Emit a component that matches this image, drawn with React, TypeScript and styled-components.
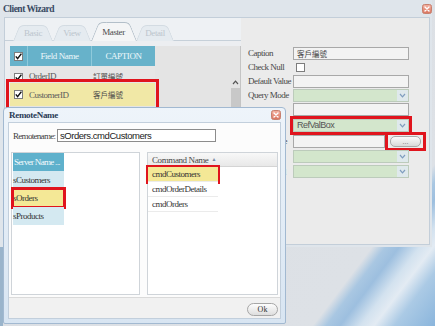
import React from 'react';
import styled, { createGlobalStyle } from 'styled-components';

const serif = `'Liberation Serif', 'Noto Sans CJK TC', serif`;
const sans = `'Liberation Sans', 'Noto Sans CJK TC', sans-serif`;
const cjk = `'Noto Sans CJK TC', 'Liberation Serif', sans-serif`;
const markRed = '#e0141d';

const GlobalStyle = createGlobalStyle`
    html, body {
        margin: 0;
        padding: 0;
    }
    body {
        width: 435px;
        height: 326px;
        overflow: hidden;
        font-family: ${serif};
    }
`;

const CloseIcon = () => (
    <svg width="10" height="10" viewBox="0 0 10 10">
        <defs>
            <linearGradient id="cg" x1="0" y1="0" x2="0" y2="1">
                <stop offset="0" stopColor="#f4b2a2" />
                <stop offset="1" stopColor="#d9735e" />
            </linearGradient>
        </defs>
        <rect x="0.5" y="0.5" width="9" height="9" rx="2" fill="url(#cg)" stroke="#c7806f" />
        <path d="M3 3 L7 7 M7 3 L3 7" stroke="#fff" strokeWidth="1.4" strokeLinecap="round" />
    </svg>
);

const Check = ({ checked }: { checked?: boolean }) => (
    <svg width="9" height="9" viewBox="0 0 9 9">
        <rect x="0.5" y="0.5" width="8" height="8" fill="#fff" stroke="#7d7d7d" />
        {checked && <path d="M1.8 4.4 L3.6 6.6 L7.4 1.6" stroke="#111" strokeWidth="1.5" fill="none" />}
    </svg>
);

const Chevron = ({ up }: { up?: boolean }) => (
    <svg width="7" height="5" viewBox="0 0 7 5">
        <path d={up ? 'M1 4 L3.5 1.2 L6 4' : 'M1 1 L3.5 3.8 L6 1'} stroke={up ? '#555' : '#7f9dbf'} strokeWidth="1.2" fill="none" />
    </svg>
);

const grid = [
    { name: 'OrderID', caption: '訂單編號' },
    { name: 'CustomerID', caption: '客戶編號', selected: true },
];

const tabs = [
    { label: 'Basic', w: 40 },
    { label: 'View', w: 38 },
    { label: 'Master', w: 45, active: true },
    { label: 'Detail', w: 38 },
];

const servers = ['sCustomers', 'sOrders', 'sProducts'];
const commands = ['cmdCustomers', 'cmdOrderDetails', 'cmdOrders'];

export default function App() {
    return (
        <>
            <GlobalStyle />
            <Desktop>
                <WizardWindow>
                    <TitleBar>
                        <span>Client Wizard</span>
                        <CloseIcon />
                    </TitleBar>
                    <WizardBody>
                        <LeftPane>
                            <TabStrip>
                                {tabs.map((t) => (
                                    <Tab key={t.label} $w={t.w} $active={t.active}>
                                        {t.label}
                                    </Tab>
                                ))}
                            </TabStrip>
                            <GridArea>
                                <GridPanel>
                                    <FieldGrid>
                                        <GridRow $header>
                                            <HeadCell>
                                                <Check checked />
                                            </HeadCell>
                                            <HeadCell>Field Name</HeadCell>
                                            <HeadCell>CAPTION</HeadCell>
                                        </GridRow>
                                        {grid.map((r) => (
                                            <GridRow key={r.name} $selected={r.selected}>
                                                <BoxCell>
                                                    <Check checked />
                                                </BoxCell>
                                                <Cell>{r.name}</Cell>
                                                <CjkCell>{r.caption}</CjkCell>
                                            </GridRow>
                                        ))}
                                    </FieldGrid>
                                    <ScrollBar>
                                        <ScrollArrow>
                                            <Chevron up />
                                        </ScrollArrow>
                                        <ScrollThumb />
                                    </ScrollBar>
                                </GridPanel>
                            </GridArea>
                        </LeftPane>
                        <FormPane>
                            <FormRow $h={14}>
                                <Label>Caption</Label>
                                <TextBox $w={116}>客戶編號</TextBox>
                            </FormRow>
                            <FormRow $h={14}>
                                <Label>Check Null</Label>
                                <CheckWrap>
                                    <Check />
                                </CheckWrap>
                            </FormRow>
                            <FormRow $h={14}>
                                <Label>Default Value</Label>
                                <TextBox $w={116} />
                            </FormRow>
                            <FormRow $h={14}>
                                <Label>Query Mode</Label>
                                <Select />
                            </FormRow>
                            <FormRow $h={15}>
                                <Label>Format</Label>
                                <TextBox $w={116} />
                            </FormRow>
                            <FormRow $h={16}>
                                <Label>Editor</Label>
                                <Select $marked>RefValBox</Select>
                            </FormRow>
                            <FormRow $h={16}>
                                <Label>Editor Value</Label>
                                <TextBox $w={92} />
                                <MarkFrame>
                                    <DotsButton>...</DotsButton>
                                </MarkFrame>
                            </FormRow>
                            <FormRow $h={15}>
                                <Label>Edit Mask</Label>
                                <Select />
                            </FormRow>
                            <FormRow $h={15}>
                                <Label>Query Field</Label>
                                <Select />
                            </FormRow>
                        </FormPane>
                    </WizardBody>
                </WizardWindow>

                <RemoteDialog>
                    <DialogTitle>
                        <span>RemoteName</span>
                        <CloseIcon />
                    </DialogTitle>
                    <DialogContent>
                        <NameRow>
                            <NameLabel>Remotename:</NameLabel>
                            <NameInput>sOrders.cmdCustomers</NameInput>
                        </NameRow>
                        <ListsRow>
                            <ListPanel $w={129}>
                                <ServerHeader>Server Name ...</ServerHeader>
                                {servers.map((s) => (
                                    <ServerItem key={s} $selected={s === 'sOrders'}>
                                        {s}
                                    </ServerItem>
                                ))}
                            </ListPanel>
                            <ListPanel $w={131}>
                                <CommandHeader>
                                    Command Name <SortMark>▲</SortMark>
                                </CommandHeader>
                                {commands.map((c) => (
                                    <CommandItem key={c} $selected={c === 'cmdCustomers'}>
                                        {c}
                                    </CommandItem>
                                ))}
                            </ListPanel>
                        </ListsRow>
                        <DialogFooter>
                            <OkButton>Ok</OkButton>
                        </DialogFooter>
                    </DialogContent>
                </RemoteDialog>
            </Desktop>
        </>
    );
}

const Desktop = styled.div`
    position: relative;
    width: 435px;
    height: 326px;
    overflow: hidden;
    background: linear-gradient(to right, #9ab4cb 0 3px, transparent 3px),
        linear-gradient(
            127deg,
            #dadee3 0%,
            #dde1e6 82%,
            #a9c7e2 84%,
            #9dbfdf 86%,
            #d3e2ef 89%,
            #e3ebf3 91%,
            #abcae5 94%,
            #8ab5dc 100%
        );
`;

const WizardWindow = styled.div`
    width: 432px;
    height: 247px;
    display: flex;
    flex-direction: column;
    background: #dfe5eb;
`;

const TitleBar = styled.div`
    height: 17px;
    display: flex;
    align-items: center;
    justify-content: space-between;
    padding: 0 0 0 3px;
    font: bold 9.5px ${serif};
    letter-spacing: -0.5px;
    color: #3a4a63;
`;

const WizardBody = styled.div`
    flex: 1;
    display: flex;
    margin: 0 2px 2px 4px;
    border: 1px solid #c3ced9;
    background: #eceef1;
`;

const LeftPane = styled.div`
    width: 236px;
    display: flex;
    flex-direction: column;
`;

const TabStrip = styled.div`
    height: 22px;
    display: flex;
    align-items: flex-end;
    padding-left: 8px;
    border-bottom: 1px solid #c6d0d9;
    background: #eef1f4;
`;

const Tab = styled.div<{ $active?: boolean; $w: number }>`
    position: relative;
    z-index: ${({ $active }) => ($active ? 2 : 1)};
    isolation: isolate;
    width: ${({ $w }) => $w}px;
    height: ${({ $active }) => ($active ? 19 : 16)}px;
    margin-bottom: -1px;
    display: flex;
    align-items: center;
    justify-content: center;
    font: 9px ${serif};
    letter-spacing: -0.4px;
    color: ${({ $active }) => ($active ? '#4b4b4b' : '#bcc5cd')};
    &::before,
    &::after {
        content: '';
        position: absolute;
        top: 0;
        bottom: 0;
        z-index: -1;
        border: 1px solid ${({ $active }) => ($active ? '#b3bfc9' : '#d3dbe2')};
        border-bottom: none;
        background: ${({ $active }) => ($active ? '#f4f5f6' : '#e5ebf0')};
        transform-origin: bottom;
    }
    &::before {
        left: 0;
        right: 50%;
        border-right: none;
        border-radius: 5px 0 0 0;
        transform: skewX(-22deg);
    }
    &::after {
        left: 50%;
        right: 0;
        border-left: none;
        border-radius: 0 5px 0 0;
        transform: skewX(22deg);
    }
`;

const GridArea = styled.div`
    flex: 1;
    display: flex;
    padding: 5px 0 0 5px;
`;

const GridPanel = styled.div`
    flex: 1;
    display: flex;
    background: #e4e4e4;
    border-right: 1px solid #c4c4c4;
`;

const FieldGrid = styled.div`
    width: 145px;
    display: flex;
    flex-direction: column;
`;

const GridRow = styled.div<{ $header?: boolean; $selected?: boolean }>`
    display: grid;
    grid-template-columns: 18px 64px 63px;
    height: ${({ $header, $selected }) => ($header ? 20 : $selected ? 23 : 17)}px;
    background: ${({ $header, $selected }) => ($header ? '#67b2ca' : $selected ? '#f1e8a6' : '#e6e6e6')};
    outline: ${({ $selected }) => ($selected ? `3px solid ${markRed}` : 'none')};
    outline-offset: 1px;
`;

const HeadCell = styled.div`
    display: flex;
    align-items: center;
    justify-content: center;
    border-right: 1px solid #8fcadb;
    font: 9px ${serif};
    letter-spacing: -0.4px;
    color: #eef8fb;
    &:last-child {
        border-right: none;
    }
`;

const BoxCell = styled.div`
    padding: 2px 0 0 4px;
`;

const Cell = styled.div`
    display: flex;
    align-items: center;
    padding-left: 1px;
    font: 9px ${serif};
    letter-spacing: -0.5px;
    color: #5a5a5a;
`;

const CjkCell = styled(Cell)`
    font: 7.5px ${cjk};
    letter-spacing: 0;
    color: #4a4a4a;
`;

const ScrollBar = styled.div`
    width: 9px;
    margin-left: auto;
    padding-top: 30px;
    display: flex;
    flex-direction: column;
`;

const ScrollArrow = styled.div`
    height: 12px;
    display: flex;
    align-items: center;
    justify-content: center;
`;

const ScrollThumb = styled.div`
    flex: 1;
    background: #c8c8c8;
`;

const FormPane = styled.div`
    flex: 1;
    display: flex;
    flex-direction: column;
    padding: 28px 0 0 7px;
    background: #ebebeb;
`;

const FormRow = styled.div<{ $h: number }>`
    height: ${({ $h }) => $h}px;
    display: flex;
    align-items: center;
`;

const Label = styled.div`
    width: 45px;
    flex-shrink: 0;
    white-space: nowrap;
    font: 9px ${serif};
    letter-spacing: -0.5px;
    color: #474747;
`;

const TextBox = styled.div<{ $w: number }>`
    width: ${({ $w }) => $w}px;
    height: 13px;
    box-sizing: border-box;
    padding-left: 3px;
    border: 1px solid #a8a8a8;
    background: #f3f3f3;
    display: flex;
    align-items: center;
    font: 7.5px ${cjk};
    color: #444;
`;

const CheckWrap = styled.div`
    padding-left: 3px;
    display: flex;
`;

const Select = styled.div<{ $marked?: boolean }>`
    position: relative;
    width: 116px;
    height: 13px;
    box-sizing: border-box;
    padding-left: 3px;
    border: 1px solid #bccbbb;
    background: linear-gradient(to right, #d3e6cc 0 calc(100% - 11px), #dfe9ec calc(100% - 11px));
    display: flex;
    align-items: center;
    font: 9px ${sans};
    letter-spacing: -0.5px;
    color: #555;
    outline: ${({ $marked }) => ($marked ? `3px solid ${markRed}` : 'none')};
    outline-offset: 0;
    &::after {
        content: '';
        position: absolute;
        right: 2px;
        top: 3px;
        width: 7px;
        height: 5px;
        background: url("data:image/svg+xml,%3Csvg xmlns='http://www.w3.org/2000/svg' width='7' height='5'%3E%3Cpath d='M1 1 L3.5 3.8 L6 1' stroke='%237f9dbf' stroke-width='1.2' fill='none'/%3E%3C/svg%3E");
    }
`;

const MarkFrame = styled.div`
    margin-left: 3px;
    padding: 1px 2px;
    display: flex;
    outline: 3px solid ${markRed};
`;

const DotsButton = styled.div`
    width: 31px;
    height: 11px;
    box-sizing: border-box;
    border: 1px solid #a9a9a9;
    border-radius: 5px;
    background: linear-gradient(#fbfbfb, #d9d9d9);
    display: flex;
    align-items: center;
    justify-content: center;
    font: 7px ${sans};
    line-height: 1;
    color: #666;
`;

const RemoteDialog = styled.div`
    position: absolute;
    left: 3px;
    top: 107px;
    width: 283px;
    height: 217px;
    box-sizing: border-box;
    display: flex;
    flex-direction: column;
    padding: 0 4px 4px 4px;
    border: 1px solid #a2b9d1;
    border-radius: 4px 4px 2px 2px;
    background: linear-gradient(#eef4fa, #d8e5f2);
`;

const DialogTitle = styled.div`
    height: 14px;
    display: flex;
    align-items: center;
    justify-content: space-between;
    padding-left: 1px;
    font: bold 9px ${serif};
    letter-spacing: -0.3px;
    color: #2a3a56;
`;

const DialogContent = styled.div`
    flex: 1;
    display: flex;
    flex-direction: column;
    border: 1px solid #c2cfdc;
    background: #fcfcfc;
`;

const NameRow = styled.div`
    display: flex;
    align-items: center;
    padding: 6px 0 0 4px;
`;

const NameLabel = styled.div`
    width: 44px;
    font: 9px ${serif};
    letter-spacing: -0.7px;
    color: #3e3e3e;
`;

const NameInput = styled.div`
    width: 159px;
    height: 13px;
    box-sizing: border-box;
    padding-left: 2px;
    border: 1px solid #8c8c8c;
    background: #fff;
    display: flex;
    align-items: center;
    font: 9.5px ${sans};
    letter-spacing: -0.45px;
    color: #222;
`;

const ListsRow = styled.div`
    display: flex;
    gap: 7px;
    padding: 10px 2px 0 2px;
`;

const ListPanel = styled.div<{ $w: number }>`
    width: ${({ $w }) => $w}px;
    height: 143px;
    box-sizing: border-box;
    padding: 0 1px;
    border: 1px solid #cfd4d9;
    background: #fff;
    display: flex;
    flex-direction: column;
`;

const ServerHeader = styled.div`
    width: 51px;
    height: 18px;
    display: flex;
    align-items: center;
    padding-left: 1px;
    box-sizing: border-box;
    background: #5fb1cc;
    font: 9px ${serif};
    letter-spacing: -0.7px;
    color: #f4fbfd;
    white-space: nowrap;
    overflow: hidden;
`;

const ServerItem = styled.div<{ $selected?: boolean }>`
    width: 51px;
    height: 18px;
    display: flex;
    align-items: center;
    background: ${({ $selected }) => ($selected ? '#f4e896' : '#d4e9f1')};
    font: 9px ${serif};
    letter-spacing: -0.5px;
    color: #333;
    outline: ${({ $selected }) => ($selected ? `3px solid ${markRed}` : 'none')};
    outline-offset: -1px;
`;

const CommandHeader = styled.div`
    height: 13px;
    margin: 0 -1px;
    padding-left: 4px;
    display: flex;
    align-items: center;
    gap: 3px;
    border-bottom: 1px solid #d4d4d4;
    background: linear-gradient(#f8f8f8, #e8e8e8);
    font: 9px ${serif};
    letter-spacing: -0.4px;
    color: #474747;
`;

const SortMark = styled.span`
    font-size: 5px;
    color: #7a8ca8;
`;

const CommandItem = styled.div<{ $selected?: boolean }>`
    width: 70px;
    height: 15px;
    margin-left: -1px;
    padding-left: 4px;
    box-sizing: border-box;
    display: flex;
    align-items: center;
    border-bottom: 1px solid #ebebeb;
    background: ${({ $selected }) => ($selected ? '#f4e896' : '#fff')};
    font: 9px ${serif};
    letter-spacing: -0.5px;
    color: #333;
    outline: ${({ $selected }) => ($selected ? `2px solid ${markRed}` : 'none')};
    outline-offset: 0;
    &:first-of-type {
        margin-top: 1px;
    }
`;

const DialogFooter = styled.div`
    flex: 1;
    margin-top: 2px;
    display: flex;
    align-items: flex-end;
    justify-content: flex-end;
    padding: 0 2px 2px 0;
    border-top: 1px solid #dadada;
    background: #f1f1f1;
`;

const OkButton = styled.div`
    width: 31px;
    height: 13px;
    box-sizing: border-box;
    border: 1px solid #a6a6a6;
    border-radius: 7px;
    background: linear-gradient(#fdfdfd, #dedede);
    display: flex;
    align-items: center;
    justify-content: center;
    font: 8px ${serif};
    color: #333;
`;
